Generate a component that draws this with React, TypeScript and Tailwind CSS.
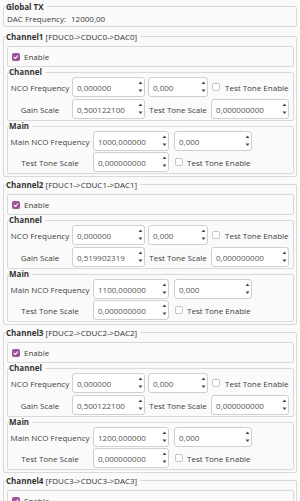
import React from 'react';

const channels = [
  { name: 'Channel1', path: '[FDUC0->CDUC0->DAC0]', gain: '0,500122100', main: '1000,000000' },
  { name: 'Channel2', path: '[FDUC1->CDUC1->DAC1]', gain: '0,519902319', main: '1100,000000' },
  { name: 'Channel3', path: '[FDUC2->CDUC2->DAC2]', gain: '0,500122100', main: '1200,000000' },
  { name: 'Channel4', path: '[FDUC3->CDUC3->DAC3]', gain: '0,500122100', main: '1300,000000' },
];

const Spin = ({ value, className }: { value: string; className: string }) => (
  <div className={`flex h-[20px] items-center justify-between rounded-[3px] border border-[#cfcfcf] bg-white pl-[4px] pr-[1px] text-[#555] ${className}`}>
    <span>{value}</span>
    <svg width="5" height="16" viewBox="0 0 5 16">
      <path d="M2.5 2.5 L4.5 5 L0.5 5 Z" fill="#4a4a4a" />
      <path d="M0.5 10.5 L4.5 10.5 L2.5 13 Z" fill="#4a4a4a" />
    </svg>
  </div>
);

const Check = ({ checked }: { checked?: boolean }) =>
  checked ? (
    <span className="flex h-[8px] w-[8px] shrink-0 items-center justify-center rounded-[2px] bg-[#9e5196]">
      <svg width="6" height="6" viewBox="0 0 6 6">
        <path d="M1 3 L2.5 4.5 L5 1.5" stroke="white" strokeWidth="1.1" fill="none" />
      </svg>
    </span>
  ) : (
    <span className="h-[8px] w-[8px] shrink-0 rounded-[2px] border border-[#c8c8c8] bg-white" />
  );

const Channel = ({ ch }: { ch: (typeof channels)[number] }) => (
  <fieldset className="mb-[1px] rounded-[2px] border border-[#d9d9d9]">
    <legend className="ml-[2px] pr-[3px] text-[8px] leading-[13px] text-[#333]">
      <span className="font-bold">{ch.name}</span> {ch.path}
    </legend>
    <div className="flex flex-col pb-[2px] pl-[3px] pr-[2px] pt-[3px]">
      <div className="flex h-[21px] items-center gap-[4px] rounded-[2px] border border-[#d9d9d9] pl-[4px]">
        <Check checked />
        <span>Enable</span>
      </div>

      <fieldset className="rounded-[2px] border border-[#d9d9d9]">
        <legend className="ml-[1px] pr-[3px] text-[8px] font-bold leading-[10px] text-[#333]">Channel</legend>
        <div className="grid grid-cols-[64px_73px_66px_78px] items-center gap-y-[2px] pb-[1px] pt-[0px]">
          <span className="text-center">NCO Frequency</span>
          <Spin value="0,000000" className="w-[73px]" />
          <Spin value="0,000" className="ml-[3px] w-[60px]" />
          <div className="flex items-center">
            <span className="ml-[1px]" />
            <Check />
            <span className="ml-[5px] whitespace-nowrap">Test Tone Enable</span>
          </div>
          <span className="text-center">Gain Scale</span>
          <Spin value={ch.gain} className="w-[73px]" />
          <span className="whitespace-nowrap text-center">Test Tone Scale</span>
          <Spin value="0,000000000" className="w-[78px]" />
        </div>
      </fieldset>

      <fieldset className="rounded-[2px] border border-[#d9d9d9]">
        <legend className="ml-[1px] pr-[3px] text-[8px] font-bold leading-[10px] text-[#333]">Main</legend>
        <div className="grid grid-cols-[84px_78px_90px] items-center gap-y-[1px] pb-[1px]">
          <span className="whitespace-nowrap text-center">Main NCO Frequency</span>
          <Spin value={ch.main} className="ml-[1px] w-[76px]" />
          <Spin value="0,000" className="ml-[4px] w-[78px]" />
          <span className="whitespace-nowrap text-center">Test Tone Scale</span>
          <Spin value="0,000000000" className="ml-[1px] w-[76px]" />
          <div className="ml-[5px] flex items-center">
            <Check />
            <span className="ml-[4px] whitespace-nowrap">Test Tone Enable</span>
          </div>
        </div>
      </fieldset>
    </div>
  </fieldset>
);

export default function App() {
  return (
    <div className="h-[501px] w-[300px] overflow-hidden bg-[#fafafa] pl-[3px] pr-[3px] font-['Open_Sans',sans-serif] text-[8px] leading-[11px] text-[#3c3c3c]">
      <fieldset className="mb-[3px] rounded-[2px] border border-[#d9d9d9]">
        <legend className="ml-[2px] pr-[3px] text-[8px] font-bold leading-[13px] text-[#333]">Global TX</legend>
        <div className="flex h-[11px] items-center pb-[0px] pl-[3px] mb-[2px]">
          <span>DAC Frequency:</span>
          <span className="ml-[5px]">12000,00</span>
        </div>
      </fieldset>
      {channels.map((ch) => (
        <Channel key={ch.name} ch={ch} />
      ))}
    </div>
  );
}
